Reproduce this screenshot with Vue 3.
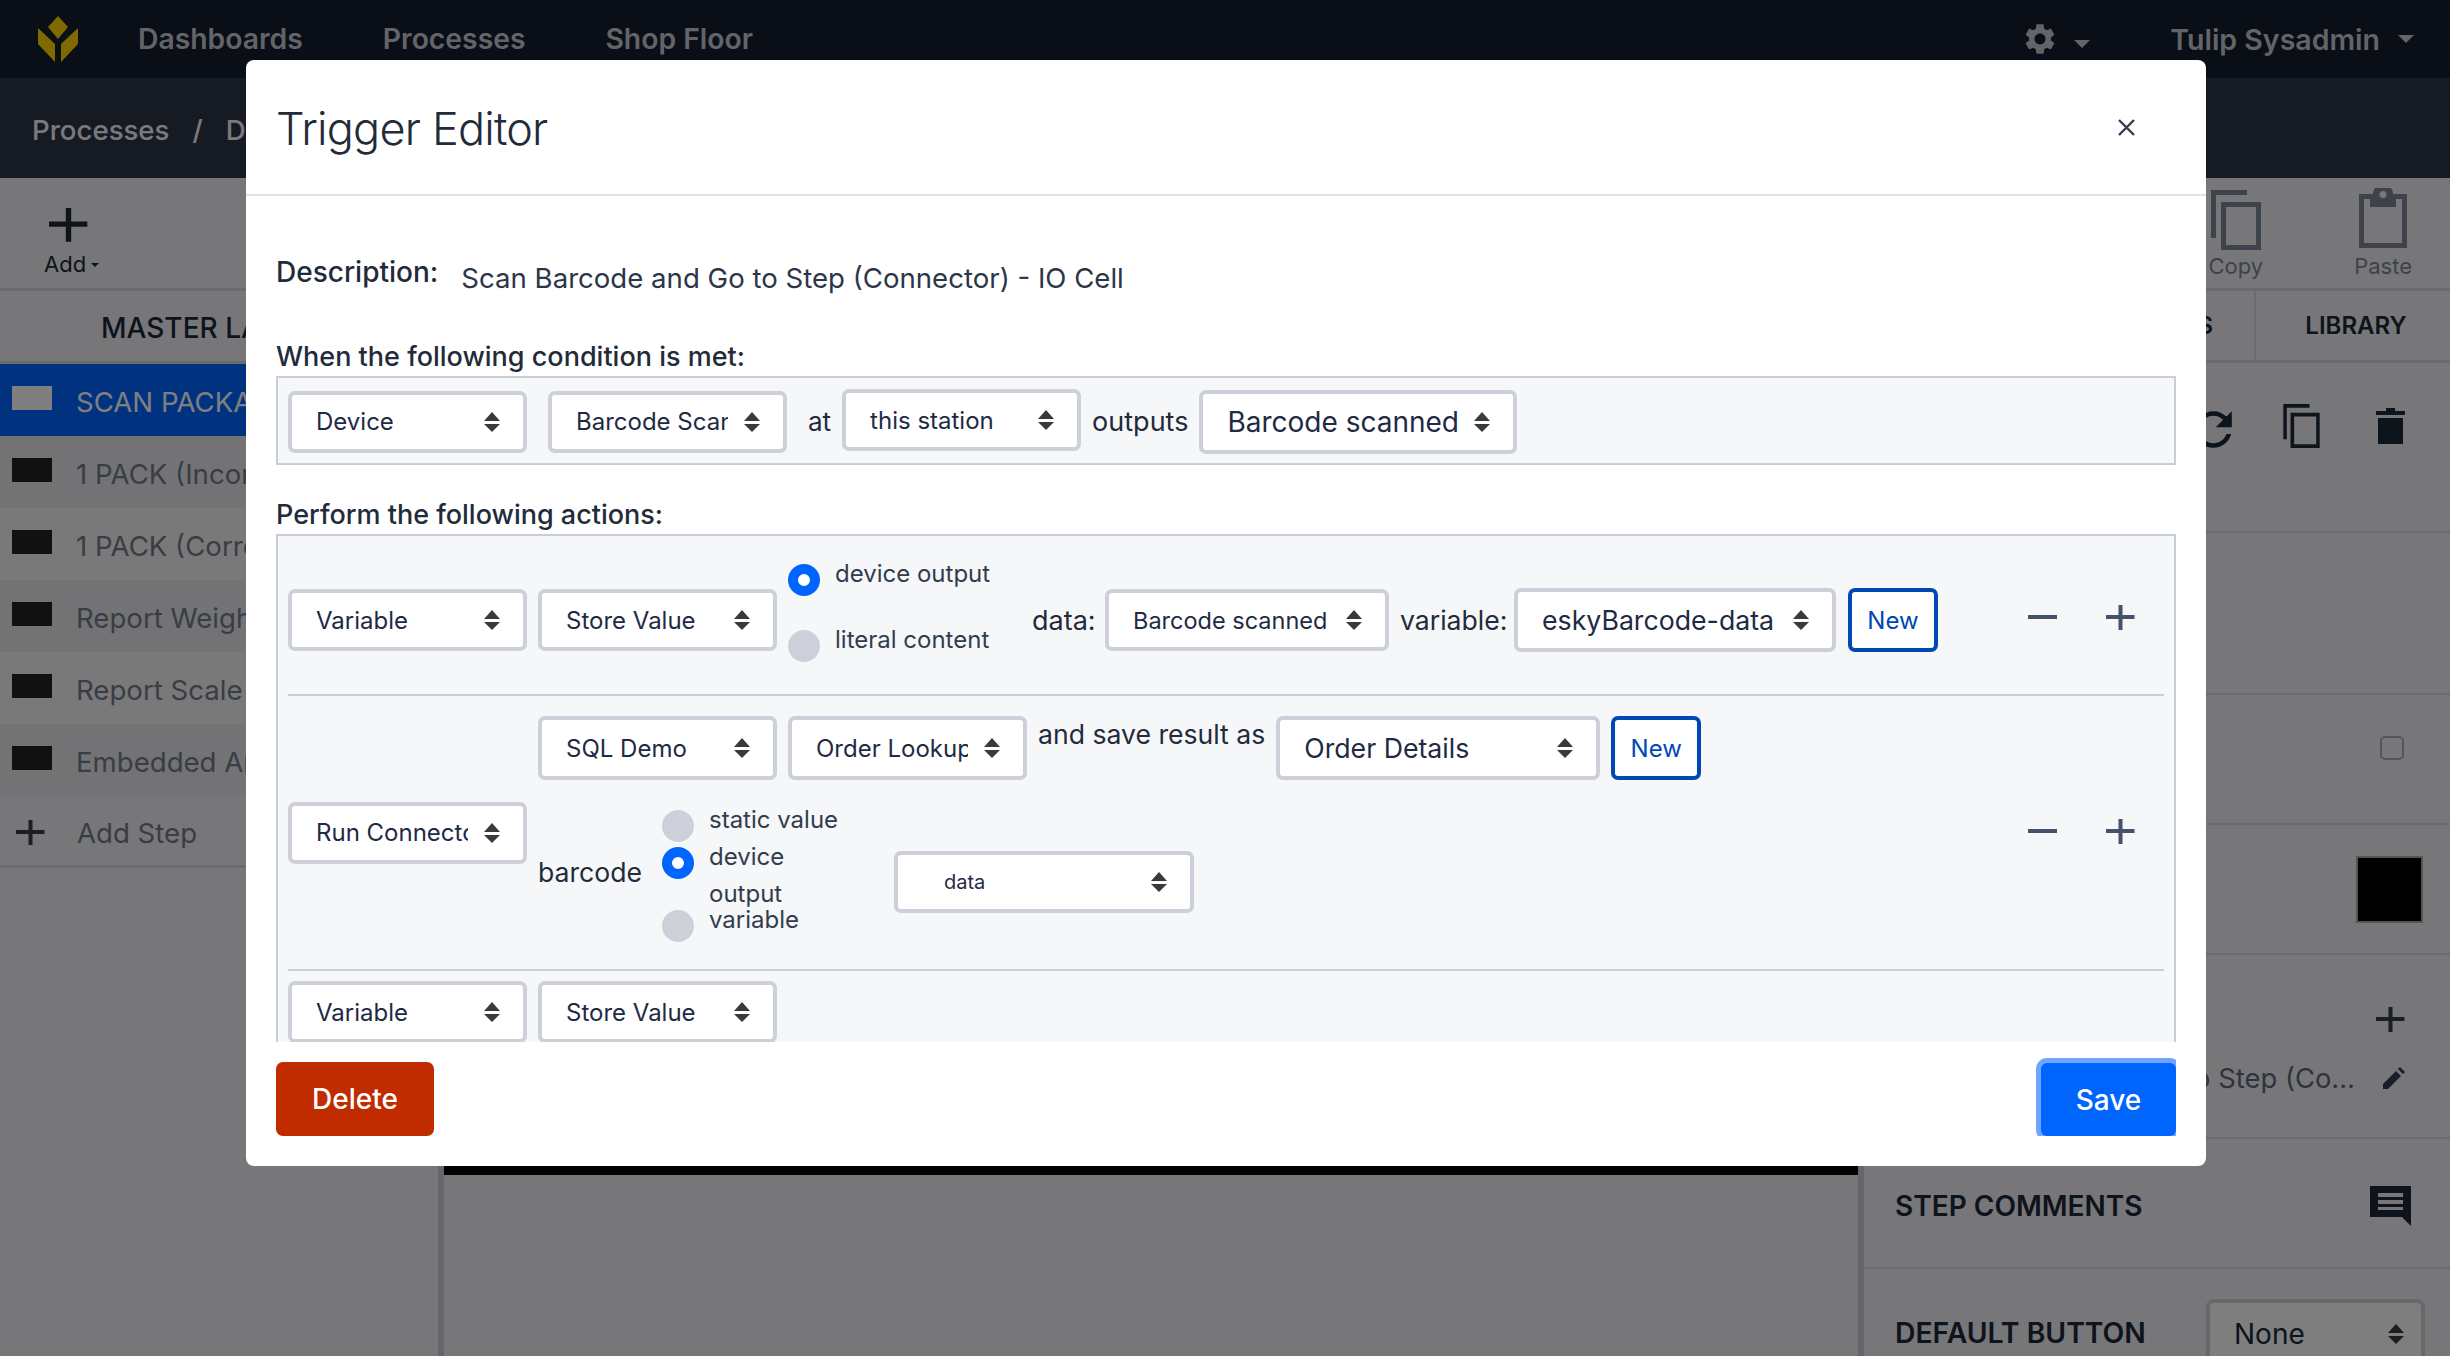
<script setup>
import { ref } from 'vue';

const steps = ref([
  { name: 'SCAN PACKAGE', active: true },
  { name: '1 PACK (Incorrect)', shade: true },
  { name: '1 PACK (Correct)' },
  { name: 'Report Weight', shade: true },
  { name: 'Report Scale' },
  { name: 'Embedded Analytics', shade: true }
]);
</script>

<template>
  <div class="page">
    <svg class="defs" width="0" height="0">
      <symbol id="updown" viewBox="0 0 16 20">
        <path d="M8 0l8 9H0zM0 12h16l-8 8z" />
      </symbol>
      <symbol id="copy" viewBox="0 0 50 60">
        <path d="M0 0h36v5H5v43H0z" />
        <path fill-rule="evenodd" d="M10 12h40v48H10zM15 17v38h30V17z" />
      </symbol>
      <symbol id="plus" viewBox="0 0 29 29">
        <path d="M12.5 3h4v10h12v4h-12v11h-4V17H0v-4h12.5z" />
      </symbol>
    </svg>

    <!-- top nav -->
    <header class="nav">
      <svg class="logo" viewBox="0 0 42 46">
        <path d="M21 0l10 11-10 12-10-12zM1 12l17 16v18L1 28zM41 12L24 28v18l17-18z" />
      </svg>
      <a class="nav-link first">Dashboards</a>
      <a class="nav-link">Processes</a>
      <a class="nav-link">Shop Floor</a>
      <div class="nav-right">
        <svg class="gear" viewBox="2.5 1.5 19 21">
          <path d="M19.14 12.94c.04-.3.06-.61.06-.94 0-.32-.02-.64-.07-.94l2.03-1.58c.18-.14.23-.41.12-.61l-1.92-3.32c-.12-.22-.37-.29-.59-.22l-2.39.96c-.5-.38-1.03-.7-1.62-.94l-.36-2.54c-.04-.24-.24-.41-.48-.41h-3.84c-.24 0-.43.17-.47.41l-.36 2.54c-.59.24-1.13.57-1.62.94l-2.39-.96c-.22-.08-.47 0-.59.22L2.74 8.87c-.12.21-.08.47.12.61l2.03 1.58c-.05.3-.09.63-.09.94s.02.64.07.94l-2.03 1.58c-.18.14-.23.41-.12.61l1.92 3.32c.12.22.37.29.59.22l2.39-.96c.5.38 1.03.7 1.62.94l.36 2.54c.05.24.24.41.48.41h3.84c.24 0 .44-.17.47-.41l.36-2.54c.59-.24 1.13-.56 1.62-.94l2.39.96c.22.08.47 0 .59-.22l1.92-3.32c.12-.22.07-.47-.12-.61l-2.01-1.58zM12 15.6c-1.98 0-3.6-1.62-3.6-3.6s1.62-3.6 3.6-3.6 3.6 1.62 3.6 3.6-1.62 3.6-3.6 3.6z" />
        </svg>
        <span class="caret gear-caret"></span>
        <span class="user">Tulip Sysadmin</span>
        <span class="caret user-caret"></span>
      </div>
    </header>

    <div class="crumbs">
      <span>Processes</span>
      <span class="slash">/</span>
      <span>Demo</span>
    </div>

    <div class="toolbar">
      <div class="tool add-tool">
        <svg class="add-plus" viewBox="0 0 29 29"><use href="#plus" /></svg>
        <span class="add-label">Add<i class="mini-caret"></i></span>
      </div>
      <div class="tool copy-tool">
        <svg class="copy-big" viewBox="0 0 50 60"><use href="#copy" /></svg>
        <span>Copy</span>
      </div>
      <div class="tool paste-tool">
        <svg class="paste-icon" viewBox="0 0 48 60">
          <path fill-rule="evenodd" d="M0 6h14a10 10 0 0 1 20 0h14v54H0zM5 11v44h38V11h-6v8H11v-8zM24 3a3.500 3.500 0 1 0 0 7 3.500 3.500 0 0 0 0-7z" />
        </svg>
        <span>Paste</span>
      </div>
    </div>

    <div class="workspace">
      <aside class="sidebar">
        <div class="side-tab">MASTER LAYOUT</div>
        <div
          v-for="step in steps"
          :key="step.name"
          class="step"
          :class="{ active: step.active, shade: step.shade }"
        >
          <span class="swatch"></span>
          <span class="step-name">{{ step.name }}</span>
        </div>
        <div class="step add-step">
          <svg class="step-plus" viewBox="0 0 29 29"><use href="#plus" /></svg>
          <span class="step-name">Add Step</span>
        </div>
      </aside>

      <main class="canvas">
        <div class="canvas-black"></div>
      </main>

      <aside class="panel">
        <div class="panel-tabs">
          <div class="panel-tab">STEP</div>
          <div class="panel-tab">WIDGETS</div>
          <div class="panel-tab">LIBRARY</div>
        </div>
        <div class="panel-row row-actions">
          <svg class="refresh" viewBox="0 0 24 24">
            <path d="M17.65 6.35C16.2 4.9 14.21 4 12 4c-4.42 0-7.99 3.58-7.99 8s3.57 8 7.99 8c3.73 0 6.84-2.55 7.73-6h-2.08c-.82 2.33-3.04 4-5.65 4-3.31 0-6-2.69-6-6s2.69-6 6-6c1.66 0 3.14.69 4.22 1.78L13 11h7V4l-2.35 2.35z" />
          </svg>
          <svg class="copy-small" viewBox="0 0 50 60"><use href="#copy" /></svg>
          <svg class="trash" viewBox="0 0 29 36">
            <path d="M10 0h9v3h10v4H0V3h10zM2 10h25v26H2z" />
          </svg>
        </div>
        <div class="panel-row row-blank"></div>
        <div class="panel-row row-check"><span class="checkbox"></span></div>
        <div class="panel-row row-color"><span class="color-box"></span></div>
        <div class="panel-row row-trigger">
          <svg class="trigger-plus" viewBox="0 0 29 29"><use href="#plus" /></svg>
          <div class="trigger-line">
            <span>Scan Barcode and Go to Step (Co...</span>
            <svg class="pencil" viewBox="0 0 22 22">
              <path d="M0 22v-5L13 4l5 5L5 22zM15 2l2-2 5 5-2 2z" />
            </svg>
          </div>
        </div>
        <div class="panel-row row-comments">
          <span class="panel-title">STEP COMMENTS</span>
          <svg class="comment" viewBox="0 0 41 40">
            <path fill-rule="evenodd" d="M0 0h41v40l-9-9H0zM8 7v4h25V7zM8 14v4h25v-4zM8 21v3h25v-3z" />
          </svg>
        </div>
        <div class="panel-row row-default">
          <span class="panel-title default-title">DEFAULT BUTTON</span>
          <div class="none-select">
            <span>None</span>
            <svg class="updown" viewBox="0 0 16 20"><use href="#updown" /></svg>
          </div>
        </div>
      </aside>
    </div>

    <div class="overlay"></div>

    <!-- modal -->
    <section class="modal">
      <div class="modal-header">
        <h2 class="modal-title">Trigger Editor</h2>
        <svg class="close" viewBox="0 0 17 17">
          <path d="M1 1l15 15M16 1L1 16" />
        </svg>
      </div>

      <div class="modal-body">
        <div class="desc-row">
          <span class="strong desc-label">Description:</span>
          <span class="desc-text">Scan Barcode and Go to Step (Connector) - IO Cell</span>
        </div>

        <div class="strong cond-label">When the following condition is met:</div>
        <div class="box cond-box">
          <div class="sel w239"><span class="sel-text">Device</span><svg class="updown" viewBox="0 0 16 20"><use href="#updown" /></svg></div>
          <div class="sel w239 next-wide"><span class="sel-text">Barcode Scanner</span><svg class="updown" viewBox="0 0 16 20"><use href="#updown" /></svg></div>
          <span class="plain at">at</span>
          <div class="sel w239 short"><span class="sel-text">this station</span><svg class="updown" viewBox="0 0 16 20"><use href="#updown" /></svg></div>
          <span class="plain outputs">outputs</span>
          <div class="sel big w318"><span class="sel-text">Barcode scanned</span><svg class="updown" viewBox="0 0 16 20"><use href="#updown" /></svg></div>
        </div>

        <div class="strong act-label">Perform the following actions:</div>
        <div class="box act-box">
          <div class="action first-action">
            <div class="sel w239"><span class="sel-text">Variable</span><svg class="updown" viewBox="0 0 16 20"><use href="#updown" /></svg></div>
            <div class="sel w239"><span class="sel-text">Store Value</span><svg class="updown" viewBox="0 0 16 20"><use href="#updown" /></svg></div>
            <div class="radios radios-wide">
              <label class="radio-item"><span class="radio on"></span><span class="radio-text">device output</span></label>
              <label class="radio-item"><span class="radio"></span><span class="radio-text">literal content</span></label>
            </div>
            <span class="plain data-label">data:</span>
            <div class="sel w284 scanned"><span class="sel-text">Barcode scanned</span><svg class="updown" viewBox="0 0 16 20"><use href="#updown" /></svg></div>
            <span class="plain var-label">variable:</span>
            <div class="sel big2 w322"><span class="sel-text">eskyBarcode-data</span><svg class="updown" viewBox="0 0 16 20"><use href="#updown" /></svg></div>
            <button class="new-btn">New</button>
            <div class="row-tools">
              <svg class="tool-icon" viewBox="0 0 29 29"><path d="M0 13h29v4H0z" /></svg>
              <svg class="tool-icon" viewBox="0 0 29 29"><use href="#plus" /></svg>
            </div>
          </div>

          <div class="action second-action">
            <div class="sel w239"><span class="sel-text">Run Connector</span><svg class="updown" viewBox="0 0 16 20"><use href="#updown" /></svg></div>
            <div class="connector">
              <div class="connector-top">
                <div class="sel w239 tall"><span class="sel-text">SQL Demo</span><svg class="updown" viewBox="0 0 16 20"><use href="#updown" /></svg></div>
                <div class="sel w239 tall"><span class="sel-text">Order Lookup</span><svg class="updown" viewBox="0 0 16 20"><use href="#updown" /></svg></div>
                <span class="plain save-as">and save result as</span>
                <div class="sel big2 w324 tall"><span class="sel-text">Order Details</span><svg class="updown" viewBox="0 0 16 20"><use href="#updown" /></svg></div>
                <button class="new-btn tall">New</button>
              </div>
              <div class="connector-bottom">
                <span class="plain barcode">barcode</span>
                <div class="radios radios-narrow">
                  <label class="radio-item"><span class="radio"></span><span class="radio-text">static value</span></label>
                  <label class="radio-item"><span class="radio on"></span><span class="radio-text">device output</span></label>
                  <label class="radio-item"><span class="radio"></span><span class="radio-text">variable</span></label>
                </div>
                <div class="sel w298 data-sel"><span class="sel-text">data</span><svg class="updown" viewBox="0 0 16 20"><use href="#updown" /></svg></div>
              </div>
            </div>
            <div class="row-tools mid">
              <svg class="tool-icon" viewBox="0 0 29 29"><path d="M0 13h29v4H0z" /></svg>
              <svg class="tool-icon" viewBox="0 0 29 29"><use href="#plus" /></svg>
            </div>
          </div>

          <div class="action third-action">
            <div class="sel w239"><span class="sel-text">Variable</span><svg class="updown" viewBox="0 0 16 20"><use href="#updown" /></svg></div>
            <div class="sel w239"><span class="sel-text">Store Value</span><svg class="updown" viewBox="0 0 16 20"><use href="#updown" /></svg></div>
          </div>
        </div>
      </div>

      <div class="modal-footer">
        <button class="delete-btn">Delete</button>
        <div class="save-wrap"><button class="save-btn">Save</button></div>
      </div>
    </section>
  </div>
</template>

<style>
html, body {
  margin: 0;
  overflow: hidden;
}
</style>

<style scoped>
* {
  box-sizing: border-box;
}

.page {
  position: relative;
  width: 2450px;
  height: 1356px;
  overflow: hidden;
  display: flex;
  flex-direction: column;
  background: #eeeff3;
  font-family: Inter, "Noto Sans", sans-serif;
  color: #1d2838;
}

.defs {
  position: absolute;
}

/* underlying app */
.nav {
  flex: none;
  height: 78px;
  background: #141c2c;
  display: flex;
  align-items: center;
  padding-left: 37px;
}

.logo {
  width: 42px;
  height: 46px;
  fill: #ffd400;
}

.nav-link {
  font-size: 28.3px;
  font-weight: 600;
  color: #c6c9d0;
  margin-left: 80px;
}

.nav-link.first {
  margin-left: 59px;
}

.nav-right {
  margin-left: auto;
  display: flex;
  align-items: center;
  padding-right: 36px;
}

.gear {
  width: 30px;
  height: 32px;
  fill: #c6c9d0;
}

.caret {
  width: 0;
  height: 0;
  border-left: 8px solid transparent;
  border-right: 8px solid transparent;
  border-top: 8px solid #c6c9d0;
}

.gear-caret {
  margin: 10px 80px 0 19px;
}

.user {
  font-size: 28.5px;
  font-weight: 600;
  color: #c6c9d0;
}

.user-caret {
  margin-left: 18px;
}

.crumbs {
  flex: none;
  height: 100px;
  background: #2c3547;
  padding: 4px 0 0 32px;
  display: flex;
  align-items: center;
  gap: 23px;
  font-size: 27.6px;
  font-weight: 500;
  color: #f3f4f6;
}

.toolbar {
  flex: none;
  height: 113px;
  border-bottom: 3px solid #d4d6de;
  display: flex;
  padding-right: 38px;
}

.tool {
  display: flex;
  flex-direction: column;
  align-items: center;
  font-size: 22px;
  color: #7c8496;
}

.add-tool {
  margin-left: 44px;
  color: #1d2838;
  padding-top: 26px;
  align-items: flex-start;
}

.add-plus {
  width: 39px;
  height: 39px;
  margin-left: 5px;
  fill: #1d2838;
}

.add-label {
  margin-top: 8px;
  line-height: 27px;
  display: flex;
  align-items: center;
  gap: 5px;
}

.mini-caret {
  width: 0;
  height: 0;
  border-left: 4px solid transparent;
  border-right: 4px solid transparent;
  border-top: 4px solid #1d2838;
}

.copy-tool {
  margin-left: auto;
  padding-top: 12px;
  margin-right: 91px;
}

.copy-big {
  width: 50px;
  height: 60px;
  fill: #7c8496;
}

.copy-tool span,
.paste-tool span {
  line-height: 27px;
  margin-top: 3px;
}

.paste-tool {
  padding-top: 10px;
}

.paste-icon {
  width: 48px;
  height: 60px;
  fill: #7c8496;
}

.paste-tool span {
  margin-top: 5px;
}

.workspace {
  flex: 1;
  display: flex;
  min-height: 0;
}

.sidebar {
  flex: none;
  width: 444px;
  border-right: 6px solid #c9ccd6;
}

.side-tab {
  height: 73px;
  border-bottom: 3px solid #d4d6de;
  padding: 3px 0 0 101px;
  display: flex;
  align-items: center;
  font-size: 28px;
  font-weight: 500;
  white-space: nowrap;
  overflow: hidden;
}

.step {
  height: 72px;
  display: flex;
  align-items: center;
  padding: 4px 0 0 12px;
  font-size: 27.6px;
  color: #727a8a;
  overflow: hidden;
  white-space: nowrap;
  background: #f2f3f5;
}

.step.shade {
  background: #e6e7ea;
}

.step.active {
  background: #0064ff;
  color: #fff;
}

.swatch {
  flex: none;
  width: 40px;
  height: 24px;
  margin-right: 24px;
  margin-top: -9px;
  background: #222;
}

.step.active .swatch {
  background: #fff;
}

.add-step {
  background: transparent;
  border-bottom: 3px solid #d4d6de;
}

.step-plus {
  width: 29px;
  height: 29px;
  margin: -3px 32px 0 4px;
  fill: #333d4f;
}

.canvas {
  flex: 1;
}

.canvas-black {
  height: 884px;
  background: #000;
}

.panel {
  flex: none;
  width: 592px;
  border-left: 6px solid #c9ccd6;
}

.panel-tabs {
  height: 72px;
  display: flex;
  border-bottom: 3px solid #d4d6de;
}

.panel-tab {
  flex: none;
  width: 196px;
  display: flex;
  align-items: center;
  justify-content: center;
  font-size: 24px;
  font-weight: 600;
  border-right: 2px solid #d4d6de;
}

.panel-tab:last-child {
  flex: 1;
  border-right: 0;
  padding-left: 6px;
}

.panel-row {
  border-bottom: 2px solid #d4d6de;
  padding: 0 26px 0 31px;
  display: flex;
  align-items: center;
}

.row-actions {
  height: 170px;
  border-bottom: 2px solid #d4d6de;
  justify-content: flex-end;
  align-items: flex-start;
  padding-top: 41px;
  padding-right: 45px;
}

.refresh {
  width: 55px;
  height: 55px;
  fill: #1d2838;
  margin-top: -2px;
}

.copy-small {
  width: 37px;
  height: 44px;
  fill: #1d2838;
  margin: 0 56px 0 42px;
}

.trash {
  width: 29px;
  height: 36px;
  fill: #1d2838;
  margin-top: 4px;
}

.row-blank {
  height: 162px;
}

.row-check {
  height: 130px;
  justify-content: flex-end;
  padding-right: 46px;
  padding-bottom: 22px;
}

.checkbox {
  width: 24px;
  height: 24px;
  border: 2px solid #a9adb8;
  border-radius: 5px;
}

.row-color {
  height: 130px;
  justify-content: flex-end;
  padding-right: 27px;
}

.color-box {
  width: 67px;
  height: 67px;
  background: #000;
  border: 2px solid #aaa;
}

.row-trigger {
  height: 184px;
  flex-direction: column;
  align-items: flex-end;
  padding-top: 49px;
  padding-right: 45px;
}

.trigger-plus {
  width: 29px;
  height: 29px;
  fill: #333d4f;
}

.trigger-line {
  display: flex;
  align-items: center;
  margin-top: 28px;
  font-size: 27.4px;
  color: #5e6678;
  white-space: nowrap;
}

.pencil {
  width: 22px;
  height: 22px;
  margin-left: 28px;
  fill: #333d4f;
}

.row-comments {
  height: 130px;
  justify-content: space-between;
  padding-top: 5px;
  padding-right: 39px;
}

.panel-title {
  font-size: 28px;
  font-weight: 600;
  color: #1d2838;
}

.default-title {
  margin-top: 17px;
  font-size: 28.3px;
}

.comment {
  width: 41px;
  height: 40px;
  fill: #1d2838;
}

.row-default {
  border-bottom: 0;
  align-items: flex-start;
  justify-content: space-between;
  padding-top: 30px;
}

.none-select {
  width: 219px;
  height: 70px;
  border: 4px solid #cdd0d9;
  border-radius: 8px;
  background: #fcfcfd;
  padding: 0 17px 0 24px;
  display: flex;
  align-items: center;
  justify-content: space-between;
  font-size: 28px;
  margin-right: -1px;
  color: #1d2838;
}

.overlay {
  position: absolute;
  inset: 0;
  background: rgba(0, 0, 0, 0.5);
}

/* trigger editor modal */
.modal {
  position: absolute;
  left: 246px;
  top: 60px;
  width: 1960px;
  height: 1106px;
  background: #fff;
  border-radius: 8px;
  display: flex;
  flex-direction: column;
  overflow: hidden;
}

.modal-header {
  flex: none;
  height: 136px;
  border-bottom: 2px solid #e2e3e9;
  padding: 0 71px 0 30px;
  display: flex;
  align-items: center;
  justify-content: space-between;
}

.modal-title {
  margin: 3px 0 0;
  font-size: 45px;
  font-weight: 300;
  letter-spacing: -0.8px;
  color: #222b3a;
}

.close {
  width: 17px;
  height: 17px;
  stroke: #323d52;
  stroke-width: 2.4;
  fill: none;
}

.modal-body {
  flex: 1;
  min-height: 0;
  overflow: hidden;
  padding: 59px 30px 0;
}

.desc-row {
  display: flex;
  align-items: flex-start;
}

.strong {
  font-size: 27px;
  font-weight: 500;
  line-height: 34px;
  color: #222b3a;
}

.desc-label {
  font-size: 28px;
}

.desc-text {
  font-size: 27.6px;
  line-height: 34px;
  margin: 6px 0 0 23px;
  color: #2c3648;
}

.cond-label {
  margin-top: 45px;
  margin-bottom: 2px;
}

.box {
  border: 2px solid #c9cdd7;
  background: #f6f7f9;
}

.cond-box {
  height: 89px;
  display: flex;
  align-items: center;
  padding: 2px 0 0 10px;
}

.sel {
  flex: none;
  height: 62px;
  border: 4px solid #cdd0d9;
  border-radius: 7px;
  background: #fff;
  padding: 0 23px 0 24px;
  display: flex;
  align-items: center;
  justify-content: space-between;
  gap: 16px;
  font-size: 24px;
  color: #1f2a44;
}

.sel-text {
  flex: 1;
  min-width: 0;
  overflow: hidden;
  white-space: nowrap;
}

.updown {
  flex: none;
  width: 16px;
  height: 20px;
  fill: #3a3a3c;
}

.w239 { width: 239px; }
.w284 { width: 284px; }
.w298 { width: 298px; }
.w318 { width: 318px; }
.w322 { width: 322px; }
.w324 { width: 324px; }

.big {
  font-size: 28px;
  height: 64px;
}

.big2 {
  font-size: 26.7px;
  height: 64px;
}

.scanned {
  font-size: 23.5px;
}

.tall {
  height: 64px;
}

.short {
  margin-top: -3px;
}

.next-wide {
  margin-left: 21px;
}

.plain {
  font-size: 27px;
  color: #222b3a;
  white-space: nowrap;
}

.at {
  margin: 0 11px 0 21px;
  font-size: 26px;
}

.outputs {
  margin: 0 11px;
}

.act-label {
  margin-top: 33px;
  margin-bottom: 2px;
}

.act-box {
  height: 600px;
  padding: 0 10px;
}

.action {
  display: flex;
  align-items: center;
  gap: 11px;
  border-bottom: 2px solid #c9cdd7;
}

.first-action {
  height: 160px;
  padding-top: 10px;
}

.radios-wide {
  flex: none;
  width: 233px;
  align-self: flex-start;
  margin-top: 9px;
  display: flex;
  flex-direction: column;
  gap: 25px;
}

.radio-item {
  display: flex;
  align-items: flex-start;
  gap: 15px;
  font-size: 24px;
  line-height: 37px;
  color: #333c4d;
}

.radio {
  flex: none;
  width: 32px;
  height: 32px;
  margin-top: 9px;
  border-radius: 50%;
  background: #cdd0d9;
}

.radio.on {
  background: #fff;
  border: 10px solid #0064ff;
}

.data-label {
  width: 62px;
}

.var-label {
  width: 103px;
  font-size: 26.6px;
}

.new-btn {
  flex: none;
  width: 90px;
  height: 64px;
  margin-left: 1px;
  border: 4px solid #0048b4;
  border-radius: 7px;
  background: #fff;
  color: #0048b4;
  font-family: inherit;
  font-size: 24px;
  padding: 0;
}

.new-btn.tall {
  margin-left: 0;
}

.row-tools {
  margin-left: auto;
  margin-top: -8px;
  padding-right: 29px;
  display: flex;
  gap: 49px;
  align-items: center;
}

.row-tools.mid {
  margin-top: -4px;
}

.tool-icon {
  width: 29px;
  height: 29px;
  fill: #46526a;
}

.second-action {
  height: 275px;
}

.connector {
  align-self: flex-start;
  padding-top: 20px;
}

.connector-top {
  display: flex;
  gap: 11px;
}

.save-as {
  line-height: 37px;
  height: 37px;
  font-size: 26.6px;
}

.connector-bottom {
  display: flex;
  align-items: center;
  margin-top: 21px;
}

.barcode {
  font-size: 26.6px;
  width: 124px;
}

.radios-narrow {
  flex: none;
  width: 232px;
  display: flex;
  flex-direction: column;
}

.radios-narrow .radio-text {
  width: 132px;
}

.radios-narrow .radio-item:nth-child(2) {
  margin-top: -4px;
}

.radios-narrow .radio-item:last-child {
  margin-top: -11px;
}

.data-sel {
  font-size: 20px;
  width: 300px;
  padding-left: 46px;
  margin-top: 21px;
}

.third-action {
  border-bottom: 0;
  padding-top: 10px;
}

.modal-footer {
  flex: none;
  height: 124px;
  padding: 0 30px 30px;
  display: flex;
  align-items: flex-end;
  justify-content: space-between;
}

.delete-btn {
  width: 158px;
  height: 74px;
  border: 0;
  border-radius: 7px;
  background: #c02b00;
  color: #fff;
  font-family: inherit;
  font-size: 28px;
  font-weight: 500;
}

.save-wrap {
  padding: 5px 0 0 5px;
  overflow: hidden;
}

.save-btn {
  display: block;
  width: 135px;
  height: 73px;
  border: 0;
  border-radius: 6px;
  background: #0064ff;
  box-shadow: 0 0 0 5px #70a5ff;
  color: #fff;
  font-family: inherit;
  font-size: 28px;
  font-weight: 500;
}
</style>
